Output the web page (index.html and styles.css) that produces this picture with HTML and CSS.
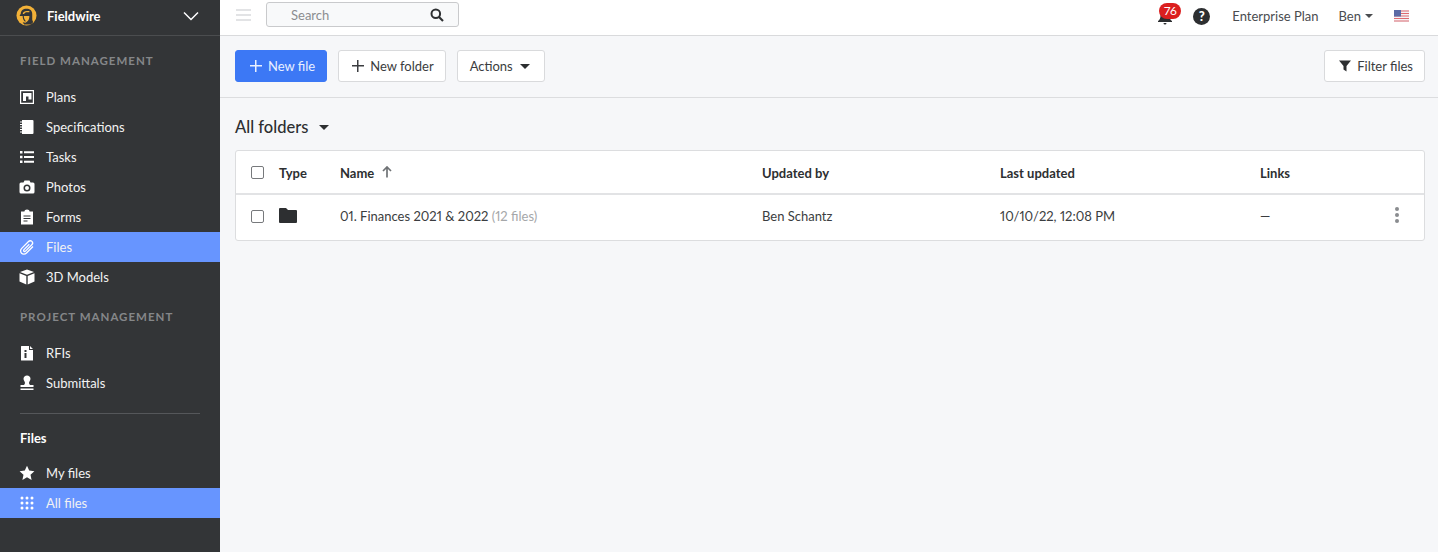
FILE: index.html
```html
<!DOCTYPE html>
<html lang="en">
<head>
    <meta charset="UTF-8">
    <title>Fieldwire - Files</title>
    <link rel="stylesheet" href="styles.css">
</head>
<body>
    <aside class="sidebar">
        <div class="brand">
            <svg class="brand-logo" viewBox="0 0 22 22">
                <circle cx="11" cy="11" r="10.500" fill="#f2b138"/>
                <path d="M5 9.500C5 6 7.500 4 11 4s6 2 6 5.500v2H4v-1z" fill="#333537"/>
                <path d="M7 9.300c.5-2 2-3 4.500-3h2.500v1.300h-2.500c-1.500 0-2.500.6-3 1.700z" fill="#f2b138"/>
                <path d="M14 11.500h3v4l1 2.500-2.500 2.300H8.500L7 18l3 .5 2-1.500c1.300-1 2-3 2-5.500z" fill="#333537"/>
                <path d="M7 11.500h1.200c0 2.500 1 4.200 2.300 5.500l-1.300.3C7.800 16 7 14 7 11.500z" fill="#333537"/>
            </svg>
            <span class="brand-name">Fieldwire</span>
            <svg class="brand-chevron" viewBox="0 0 16 10"><path d="M1 1.500l7 7 7-7" fill="none" stroke="#fff" stroke-width="1.500"/></svg>
        </div>

        <div class="nav-label">FIELD MANAGEMENT</div>
        <a class="nav-item">
            <svg class="nav-icon" viewBox="0 0 16 16"><path fill-rule="evenodd" d="M1 1h14v14H1zM2.200 2.200v11.600h11.600V2.200z" fill="#fff"/><path d="M4 4h8.500v6.500H9.500V7.500H7V12H4z" fill="#fff"/></svg>
            Plans
        </a>
        <a class="nav-item">
            <svg class="nav-icon" viewBox="0 0 16 16"><path d="M3 1h10.500a1 1 0 0 1 1 1v12a1 1 0 0 1-1 1H3z" fill="#fff"/><path d="M1 3h3M1 5.500h3M1 8h3M1 10.500h3M1 13h3" stroke="#fff" stroke-width="1"/></svg>
            Specifications
        </a>
        <a class="nav-item">
            <svg class="nav-icon" viewBox="0 0 16 16"><path d="M1 2h2.500v2.500H1zM1 6.800h2.500v2.500H1zM1 11.500h2.500V14H1zM5 2.300h10v2H5zM5 7h10v2H5zM5 11.700h10v2H5z" fill="#fff"/></svg>
            Tasks
        </a>
        <a class="nav-item">
            <svg class="nav-icon" viewBox="0 0 16 16"><path fill-rule="evenodd" d="M2 3.500h2.500L5.500 1.500h5l1 2H14a1.500 1.500 0 0 1 1.500 1.500v8a1.500 1.500 0 0 1-1.500 1.500H2A1.500 1.500 0 0 1 .5 13V5A1.500 1.500 0 0 1 2 3.500zM8 5.500a3.500 3.500 0 1 0 0 7 3.500 3.500 0 0 0 0-7zM8 7a2 2 0 1 1 0 4 2 2 0 0 1 0-4z" fill="#fff"/></svg>
            Photos
        </a>
        <a class="nav-item">
            <svg class="nav-icon" viewBox="0 0 16 16"><path fill-rule="evenodd" d="M5.500 2.500V2a2.500 1.500 0 0 1 5 0v.5H14V15.500H2V2.500zM4.500 6.500v1h7v-1zM4.500 9v1h7V9zM4.500 11.500v1h4v-1z" fill="#fff"/></svg>
            Forms
        </a>
        <a class="nav-item active">
            <svg class="nav-icon" viewBox="0 0 16 16"><path d="M14 7.500l-6.500 6.500c-1.500 1.500-3.800 1.500-5 .2-1.300-1.300-1.200-3.400.2-4.800l6.800-6.900c1-1 2.500-1 3.400-.1.900.9.900 2.400-.1 3.400l-6.300 6.300c-.5.500-1.200.5-1.600.1-.4-.4-.4-1.100.1-1.600l5.300-5.300" fill="none" stroke="#fff" stroke-width="1.300"/></svg>
            Files
        </a>
        <a class="nav-item">
            <svg class="nav-icon" viewBox="0 0 16 16"><path d="M8 .5l7 2.500-7 2.800L1 3zM.5 4.300l6.800 2.700v8.500L.5 12.500zM15.500 4.300L8.700 7v8.500l6.800-3z" fill="#fff"/></svg>
            3D Models
        </a>

        <div class="nav-label">PROJECT MANAGEMENT</div>
        <a class="nav-item">
            <svg class="nav-icon" viewBox="0 0 16 16"><path fill-rule="evenodd" d="M2.500 1H10v4h4v10.500H2.500a.5.5 0 0 1-.5-.5V1.500a.5.5 0 0 1 .5-.5zM5.500 5v2h2V5zM5.500 8v5h2V8zM11 1l3 3h-3z" fill="#fff"/></svg>
            RFIs
        </a>
        <a class="nav-item">
            <svg class="nav-icon" viewBox="0 0 16 16"><path d="M8 .5c2 0 3.500 1.500 3.500 3.300 0 2-1.500 2.700-1.500 4.200 0 .8.500 1.500 1 2h3.500v2H1.500v-2H5c.5-.5 1-1.200 1-2 0-1.500-1.500-2.200-1.500-4.200C4.500 2 6 .5 8 .5zM1.500 13.500h13v1.500h-13z" fill="#fff"/></svg>
            Submittals
        </a>

        <div class="nav-divider"></div>
        <div class="nav-title">Files</div>
        <a class="nav-item">
            <svg class="nav-icon" viewBox="0 0 16 16"><path d="M8 .8l2.200 4.800 5.200.6-3.900 3.500 1.100 5.200L8 12.300l-4.600 2.600 1.100-5.200L.6 6.200l5.200-.6z" fill="#fff"/></svg>
            My files
        </a>
        <a class="nav-item active">
            <svg class="nav-icon" viewBox="0 0 16 16" fill="#fff"><circle cx="3" cy="3" r="1.500"/><circle cx="8" cy="3" r="1.500"/><circle cx="13" cy="3" r="1.500"/><circle cx="3" cy="8" r="1.500"/><circle cx="8" cy="8" r="1.500"/><circle cx="13" cy="8" r="1.500"/><circle cx="3" cy="13" r="1.500"/><circle cx="8" cy="13" r="1.500"/><circle cx="13" cy="13" r="1.500"/></svg>
            All files
        </a>
    </aside>

    <div class="content">
        <header class="topbar">
            <div class="hamburger"><span></span><span></span><span></span></div>
            <div class="search">
                <span class="search-text">Search</span>
                <svg class="search-icon" viewBox="0 0 14 14"><circle cx="5.800" cy="5.800" r="4.300" fill="none" stroke="#2d2f31" stroke-width="2"/><path d="M9 9l4 4" stroke="#2d2f31" stroke-width="2.200"/></svg>
            </div>
            <div class="topbar-right">
                <div class="bell">
                    <svg class="bell-icon" viewBox="0 0 16 16"><path d="M8 1c3 0 4.500 2.500 4.500 5.500 0 3 1 4.500 2.500 5.500v1H1v-1c1.500-1 2.500-2.500 2.500-5.500C3.500 3.500 5 1 8 1zM6.500 14h3a1.500 1.500 0 0 1-3 0z" fill="#2d2f31"/></svg>
                    <span class="badge">76</span>
                </div>
                <span class="help">?</span>
                <span class="plan">Enterprise Plan</span>
                <span class="user">Ben<span class="caret small"></span></span>
                <svg class="flag" viewBox="0 0 15 12">
                    <rect width="15" height="12" fill="#f3f3f6"/>
                    <path d="M0 1h15M0 3.500h15M0 6h15M0 8.500h15M0 11h15" stroke="#de6a70" stroke-width="1.200"/>
                    <rect width="7" height="6.500" fill="#5a6aa5"/>
                </svg>
            </div>
        </header>

        <div class="toolbar">
            <button class="btn primary"><span class="plus"></span>New file</button>
            <button class="btn"><span class="plus"></span>New folder</button>
            <button class="btn actions">Actions<span class="caret"></span></button>
            <button class="btn filter">
                <svg class="filter-icon" viewBox="0 0 12 12"><path d="M0 .5h12L7.500 6v5.500l-3-2V6z" fill="#2d2f31"/></svg>
                Filter files
            </button>
        </div>

        <main class="files">
            <div class="folder-title">All folders<span class="caret"></span></div>
            <div class="file-table">
                <div class="file-row head">
                    <span class="check"></span>
                    <span>Type</span>
                    <span class="name-head">Name
                        <svg class="sort-icon" viewBox="0 0 10 12"><path d="M5 11.500V1M1 5l4-4 4 4" fill="none" stroke="#6f7275" stroke-width="1.700"/></svg>
                    </span>
                    <span>Updated by</span>
                    <span>Last updated</span>
                    <span>Links</span>
                </div>
                <div class="file-row">
                    <span class="check"></span>
                    <svg class="folder-icon" viewBox="0 0 18 15"><path d="M1 0h6l2 2h8a1 1 0 0 1 1 1v11a1 1 0 0 1-1 1H1a1 1 0 0 1-1-1V1a1 1 0 0 1 1-1z" fill="#2d2f31"/></svg>
                    <span>01. Finances 2021 &amp; 2022 <span class="muted">(12 files)</span></span>
                    <span>Ben Schantz</span>
                    <span>10/10/22, 12:08 PM</span>
                    <span class="links-cell">—<span class="kebab"><i></i><i></i><i></i></span></span>
                </div>
            </div>
        </main>
    </div>
</body>
</html>
```

FILE: styles.css
```css
* {
    margin: 0;
    padding: 0;
    box-sizing: border-box;
    font-family: Lato, 'Open Sans', sans-serif;
    font-variant-numeric: proportional-nums;
}

html, body {
    height: 100%;
}

body {
    display: flex;
    background-color: #f6f7f9;
    color: #2d2f31;
    font-size: 13px;
    overflow: hidden;
}

/* sidebar */
.sidebar {
    width: 220px;
    flex-shrink: 0;
    background-color: #333537;
    color: #fff;
}

.brand {
    height: 36px;
    display: flex;
    align-items: center;
    padding: 0 21px 4px 16px;
    border-bottom: 1px solid #4b4d4f;
}

.brand-logo {
    width: 21px;
    height: 21px;
    margin-right: 10px;
}

.brand-name {
    font-weight: 700;
    flex: 1;
}

.brand-chevron {
    width: 16px;
    height: 10px;
}

.nav-label {
    font-size: 11.500px;
    letter-spacing: 1px;
    font-weight: 700;
    color: #858789;
    height: 16px;
    line-height: 16px;
    padding-left: 20px;
    margin: 17px 0 13px;
}

.nav-item {
    display: flex;
    align-items: center;
    height: 30px;
    padding-left: 19px;
    color: #f2f2f2;
}

.nav-item.active {
    background-color: #6795ff;
}

.nav-icon {
    width: 16px;
    height: 16px;
    margin-right: 11px;
}

.nav-divider {
    height: 1px;
    margin: 15px 20px 0;
    background-color: #55575a;
}

.nav-title {
    font-weight: 700;
    height: 18px;
    line-height: 18px;
    padding-left: 20px;
    margin: 15px 0 11px;
}

/* top bar */
.content {
    flex: 1;
    min-width: 0;
}

.topbar {
    height: 36px;
    display: flex;
    align-items: center;
    background-color: #fff;
    border-bottom: 1px solid #d9dadc;
    padding: 0 29px 6px 16px;
}

.hamburger {
    width: 15px;
    margin-right: 15px;
}

.hamburger span {
    display: block;
    height: 2px;
    margin-bottom: 3px;
    background-color: #e2e3e5;
}

.hamburger span:last-child {
    margin-bottom: 0;
}

.search {
    width: 193px;
    height: 25px;
    display: flex;
    align-items: center;
    justify-content: space-between;
    padding: 0 14px 0 24px;
    border: 1px solid #c9cacc;
    border-radius: 3px;
    background-color: #f8f9fa;
}

.search-text {
    color: #8b8d90;
}

.search-icon {
    width: 14px;
    height: 14px;
}

.topbar-right {
    margin-left: auto;
    margin-top: 2px;
    display: flex;
    align-items: center;
}

.bell {
    position: relative;
    width: 16px;
    height: 16px;
    margin: 2px 20px 0 0;
}

.bell-icon {
    width: 16px;
    height: 16px;
    display: block;
}

.badge {
    position: absolute;
    left: 2px;
    top: -6px;
    width: 22px;
    height: 16px;
    border-radius: 8px;
    background-color: #db1f1f;
    color: #fff;
    font-size: 12px;
    line-height: 16px;
    text-align: center;
}

.help {
    width: 17px;
    height: 17px;
    border-radius: 50%;
    background-color: #2d2f31;
    color: #fff;
    font-size: 13px;
    font-weight: 900;
    line-height: 17px;
    text-align: center;
    margin: 1px 22px 0 0;
}

.plan {
    color: #4a4c4f;
    margin-right: 20px;
}

.user {
    color: #4a4c4f;
    display: flex;
    align-items: center;
    margin-right: 21px;
}

.flag {
    width: 15px;
    height: 12px;
}

.caret {
    display: inline-block;
    width: 0;
    height: 0;
    margin-left: 7px;
    border-left: 5px solid transparent;
    border-right: 5px solid transparent;
    border-top: 5px solid #2d2f31;
}

.caret.small {
    margin-left: 4px;
    border-width: 4px 4px 0;
    border-top-color: #4a4c4f;
}

/* toolbar */
.toolbar {
    height: 62px;
    display: flex;
    align-items: flex-start;
    gap: 11px;
    padding: 14px 13px 0 15px;
    border-bottom: 1px solid #dcdddf;
}

.btn {
    height: 32px;
    display: flex;
    align-items: center;
    padding: 0 11px 0 13px;
    background-color: #fff;
    border: 1px solid #d9dadc;
    border-radius: 3px;
    color: #3b3d40;
    font-size: 13px;
}

.btn.primary {
    padding: 0 11px 0 14px;
    background-color: #3c78f5;
    border-color: #3c78f5;
    color: #e9f0ff;
}

.btn.actions {
    padding: 0 14px 0 12px;
}

.btn.filter {
    margin-left: auto;
    padding: 0 11px 0 14px;
}

.plus {
    width: 12px;
    height: 12px;
    margin-right: 6px;
    background: linear-gradient(currentColor, currentColor) center / 100% 1.500px no-repeat,
                linear-gradient(currentColor, currentColor) center / 1.500px 100% no-repeat;
}

.filter-icon {
    width: 12px;
    height: 12px;
    margin-right: 6px;
}

/* file table */
.files {
    padding: 0 13px 0 15px;
}

.folder-title {
    display: flex;
    align-items: center;
    height: 20px;
    margin-top: 19px;
    font-size: 16.500px;
    font-weight: 500;
}

.folder-title .caret {
    margin-left: 11px;
}

.file-table {
    margin-top: 13px;
    background-color: #fff;
    border: 1px solid #dcdddf;
    border-radius: 3px;
}

.file-row {
    display: grid;
    grid-template-columns: 28px 61px 422px 238px 260px 1fr;
    align-items: center;
    height: 45px;
    padding: 0 0 3px 15px;
    color: #3b3d40;
}

.file-row.head {
    height: 44px;
    padding: 1px 0 0 15px;
    border-bottom: 2px solid #e2e3e5;
    font-weight: 700;
    color: #2d2f31;
}

.check {
    width: 13px;
    height: 13px;
    border: 1px solid #77797c;
    border-radius: 2px;
}

.folder-icon {
    width: 18px;
    height: 15px;
    margin-bottom: 2px;
}

.muted {
    color: #a5a7a9;
}

.sort-icon {
    width: 10px;
    height: 12px;
    margin-left: 5px;
}

.links-cell {
    display: flex;
    align-items: center;
    justify-content: space-between;
    padding-right: 25px;
}

.kebab i {
    display: block;
    width: 4px;
    height: 4px;
    margin-bottom: 2px;
    border-radius: 50%;
    background-color: #8a8c8f;
}
```
